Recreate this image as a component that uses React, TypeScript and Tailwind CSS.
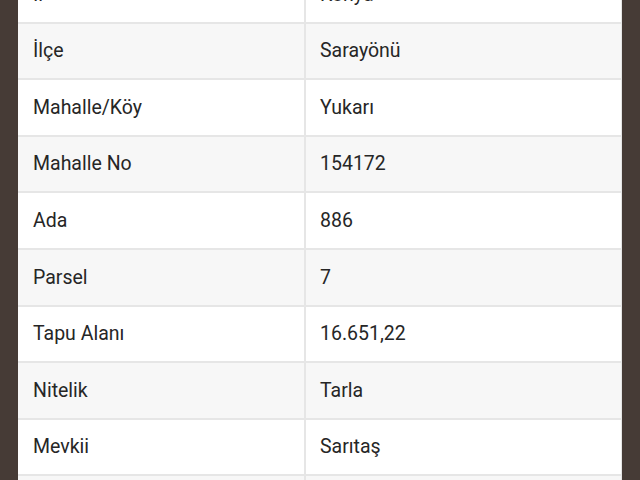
const rows: [string, string][] = [
  ["İl", "Konya"],
  ["İlçe", "Sarayönü"],
  ["Mahalle/Köy", "Yukarı"],
  ["Mahalle No", "154172"],
  ["Ada", "886"],
  ["Parsel", "7"],
  ["Tapu Alanı", "16.651,22"],
  ["Nitelik", "Tarla"],
  ["Mevkii", "Sarıtaş"],
  ["Zemin Tipi", "Ana Taşınmaz"],
]

export default function App() {
  return (
    <div className="w-[640px] h-[480px] overflow-hidden bg-[#463b36] px-[18px] font-['Roboto',sans-serif]">
      <div className="mt-[-33px] bg-white w-[604px] border-r border-[#e5e5e5]">
        {rows.map(([k, v], i) => (
          <div
            key={k}
            className={`flex h-[56.6px] border-b-2 border-[#e6e6e6] ${i % 2 === 1 ? "bg-[#f7f7f7]" : "bg-white"}`}
          >
            <div className="w-[288px] flex items-center pl-[15px] text-[19.5px] text-[#262626] border-r-2 border-[#e6e6e6]">
              {k}
            </div>
            <div className="flex-1 flex items-center pl-[14px] text-[19.5px] text-[#262626]">{v}</div>
          </div>
        ))}
      </div>
    </div>
  )
}
